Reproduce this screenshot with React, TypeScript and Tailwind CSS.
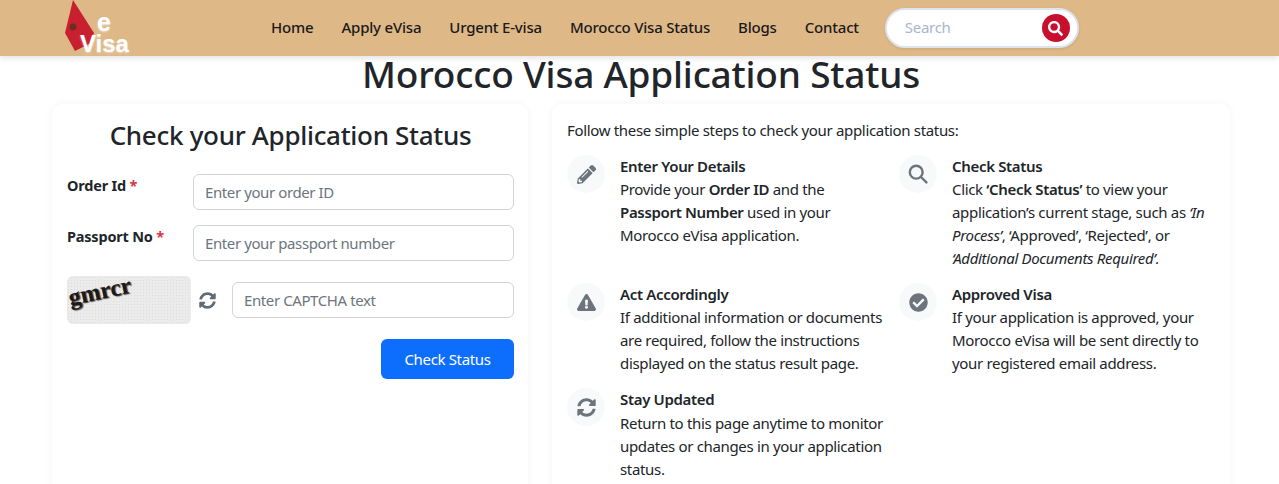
import { FaPencilAlt, FaSearch, FaExclamationTriangle, FaCheckCircle, FaSyncAlt } from "react-icons/fa";
import type { ReactNode } from "react";

function Step({ icon, title, children, className, titleClass }: { icon: ReactNode; title: string; children: ReactNode; className?: string; titleClass?: string }) {
  return (
    <div className={"flex gap-[15px] " + (className ?? "")}>
      <div className="w-[38px] h-[38px] shrink-0 rounded-full bg-[#f8f9fa] flex items-center justify-center text-[#6c757d] text-[19px]">{icon}</div>
      <div className="text-[15px] leading-[23px] text-[#212529] tracking-[-0.33px] whitespace-nowrap">
        <div className={"font-semibold " + (titleClass ?? "")}>{title}</div>
        {children}
      </div>
    </div>
  );
}

function Field({ placeholder, className }: { placeholder: string; className?: string }) {
  return (
    <input
      readOnly
      placeholder={placeholder}
      className={"h-[36px] rounded-[6px] border border-[#ced4da] bg-white px-[11px] text-[15px] tracking-[-0.4px] placeholder:text-[#6c757d] outline-none " + (className ?? "")}
    />
  );
}

export default function App() {
  const nav = ["Home", "Apply eVisa", "Urgent E-visa", "Morocco Visa Status", "Blogs", "Contact"];
  return (
    <div className="h-[484px] overflow-hidden bg-white font-['Noto_Sans',sans-serif] text-[#212529]">
      <header className="relative z-10 h-[56px] bg-[#deb887] shadow-[0_2px_6px_rgba(0,0,0,0.12)] flex items-center pl-[64px]">
        <div className="relative w-[66px] h-[56px] shrink-0">
          <svg width="34" height="52" viewBox="0 0 34 52" className="absolute left-0 top-0">
            <path d="M9 0 L30 33 L25 44 L11 51 L1 33 Z" fill="#c8202f" />
            <circle cx="9" cy="27" r="3.5" fill="#6e2b22" />
          </svg>
          <span className="absolute left-[33px] top-[12px] text-[25px] leading-[20px] font-bold text-white font-['Liberation_Sans',sans-serif] [text-shadow:0_1px_2px_rgba(255,255,255,0.5)]">e</span>
          <span className="absolute left-[16px] top-[34px] text-[24px] leading-[20px] font-bold text-white font-['Liberation_Sans',sans-serif] [text-shadow:0_1px_2px_rgba(255,255,255,0.5)]">Visa</span>
        </div>
        <nav className="flex items-center gap-[28px] ml-[141px] -mt-px text-[15px] font-medium text-[#1a1a1a] tracking-[-0.2px]">
          {nav.map((n) => (
            <span key={n}>{n}</span>
          ))}
        </nav>
        <div className="ml-[26px] w-[194px] h-[40px] rounded-full bg-white border-2 border-[#dfe3ec] shadow-[0_1px_3px_rgba(0,0,0,0.1)] flex items-center justify-between pl-[18px] pr-[7px]">
          <span className="text-[15px] text-[#a9b6cf] tracking-[-0.3px] -mt-px">Search</span>
          <span className="w-[28px] h-[28px] rounded-full bg-[#c8102e] flex items-center justify-center text-white text-[15px]">
            <FaSearch />
          </span>
        </div>
      </header>

      <h1 className="text-center text-[37px] leading-[38px] font-medium -mt-[1px] ml-[3px] tracking-[-0.2px]">Morocco Visa Application Status</h1>

      <main className="flex gap-[24px] mt-[11px] pl-[52px] pr-[49px]">
        <section className="w-[476px] h-[500px] shrink-0 rounded-[10px] bg-white shadow-[0_0_8px_rgba(0,0,0,0.05)] pt-[14px] pl-[15px] pr-[14px]">
          <h2 className="text-center text-[26px] leading-[34px] font-medium tracking-[-0.3px] mb-[22px]">Check your Application Status</h2>
          <div className="flex items-start mb-[15px]">
            <label className="w-[126px] -mt-px text-[14.5px] leading-[24px] font-bold tracking-[-0.2px]">
              Order Id <span className="text-[#dc3545]">*</span>
            </label>
            <Field placeholder="Enter your order ID" className="flex-1 min-w-0" />
          </div>
          <div className="flex items-start mb-[15px]">
            <label className="w-[126px] -mt-px text-[14.5px] leading-[24px] font-bold tracking-[-0.2px]">
              Passport No <span className="text-[#dc3545]">*</span>
            </label>
            <Field placeholder="Enter your passport number" className="flex-1 min-w-0" />
          </div>
          <div className="flex items-center">
            <div className="relative w-[124px] h-[48px] overflow-hidden rounded-[6px] bg-[#ebebeb] bg-[radial-gradient(#dcdcdc_1px,transparent_1px)] bg-[length:3px_3px]">
              <span className="absolute left-[1px] top-[3px] -rotate-[12deg] font-['Liberation_Serif',serif] font-bold text-[24px] leading-[24px] text-[#1a1a1a] [text-shadow:1px_1px_1px_#444]">gmrcr</span>
            </div>
            <FaSyncAlt className="ml-[8px] text-[17px] text-[#5f6b76]" />
            <Field placeholder="Enter CAPTCHA text" className="ml-[16px] flex-1 min-w-0" />
          </div>
          <div className="flex justify-end mt-[15px]">
            <button className="w-[133px] h-[40px] rounded-[6px] bg-[#0d6efd] text-white text-[15px] tracking-[-0.35px]">Check Status</button>
          </div>
        </section>

        <section className="flex-1 min-w-0 h-[500px] rounded-[10px] bg-white shadow-[0_0_8px_rgba(0,0,0,0.05)] pt-[15px] px-[15px]">
          <p className="text-[15px] leading-[23px] tracking-[-0.33px] mb-[13px]">Follow these simple steps to check your application status:</p>
          <div className="grid grid-cols-[332px_1fr] gap-y-[13px]">
            <Step icon={<FaPencilAlt />} title="Enter Your Details" className="h-[115px]">
              Provide your <b className="font-semibold">Order ID</b> and the<br />
              <b className="font-semibold">Passport Number</b> used in your<br />
              Morocco eVisa application.
            </Step>
            <Step
              icon={
                <svg width="20" height="20" viewBox="0 0 20 20" fill="none" stroke="currentColor" strokeWidth="2.4" strokeLinecap="round">
                  <circle cx="8.2" cy="8.2" r="6.4" />
                  <path d="M13 13 L18.4 18.4" />
                </svg>
              }
              title="Check Status"
              className="h-[115px]"
            >
              Click <b className="font-semibold">‘Check Status’</b> to view your<br />
              application’s current stage, such as <i>‘In<br />Process’</i>, ‘Approved’, ‘Rejected’, or<br />
              <i>‘Additional Documents Required’.</i>
            </Step>
            <Step icon={<FaExclamationTriangle />} title="Act Accordingly" className="h-[92px]">
              If additional information or documents<br />
              are required, follow the instructions<br />
              displayed on the status result page.
            </Step>
            <Step icon={<FaCheckCircle />} title="Approved Visa" className="h-[92px]">
              If your application is approved, your<br />
              Morocco eVisa will be sent directly to<br />
              your registered email address.
            </Step>
            <Step icon={<FaSyncAlt />} title="Stay Updated" titleClass="mb-px">
              Return to this page anytime to monitor<br />
              updates or changes in your application<br />
              status.
            </Step>
          </div>
        </section>
      </main>
    </div>
  );
}
